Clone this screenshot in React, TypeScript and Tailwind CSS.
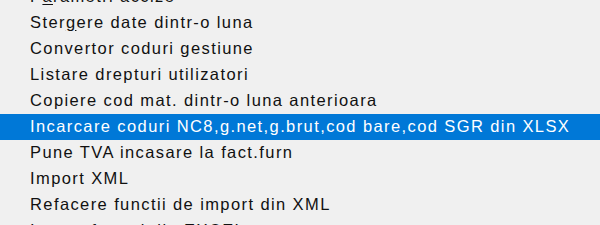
import React from "react";

type Item = { label: string; hot?: number; active?: boolean };

const items: Item[] = [
  { label: "Parametri accize", hot: 1 },
  { label: "Stergere date dintr-o luna", hot: 4 },
  { label: "Convertor coduri gestiune" },
  { label: "Listare drepturi utilizatori" },
  { label: "Copiere cod mat. dintr-o luna anterioara" },
  { label: "Incarcare coduri NC8,g.net,g.brut,cod bare,cod SGR din XLSX", active: true },
  { label: "Pune TVA incasare la fact.furn" },
  { label: "Import XML" },
  { label: "Refacere functii de import din XML" },
  { label: "Import facturi din EXCEL" },
];

function Label({ item }: { item: Item }) {
  if (item.hot === undefined) return <>{item.label}</>;
  const i = item.hot;
  return (
    <>
      {item.label.slice(0, i)}
      <span className="underline underline-offset-2">{item.label[i]}</span>
      {item.label.slice(i + 1)}
    </>
  );
}

export default function App() {
  return (
    <div className="h-[225px] w-[600px] overflow-hidden bg-[#f0f0f0] font-['Liberation_Sans',Arial,sans-serif] text-[16.5px] tracking-[1.4px] text-[#111]">
      <ul className="mt-[-16px]">
        {items.map((item) => (
          <li
            key={item.label}
            className={
              item.active
                ? "flex h-[26px] items-center whitespace-nowrap bg-[#0078d7] pl-[30px] pb-[2px] text-white"
                : "flex h-[26px] items-center whitespace-nowrap pl-[30px] pb-[2px]"
            }
          >
            <Label item={item} />
          </li>
        ))}
      </ul>
    </div>
  );
}
